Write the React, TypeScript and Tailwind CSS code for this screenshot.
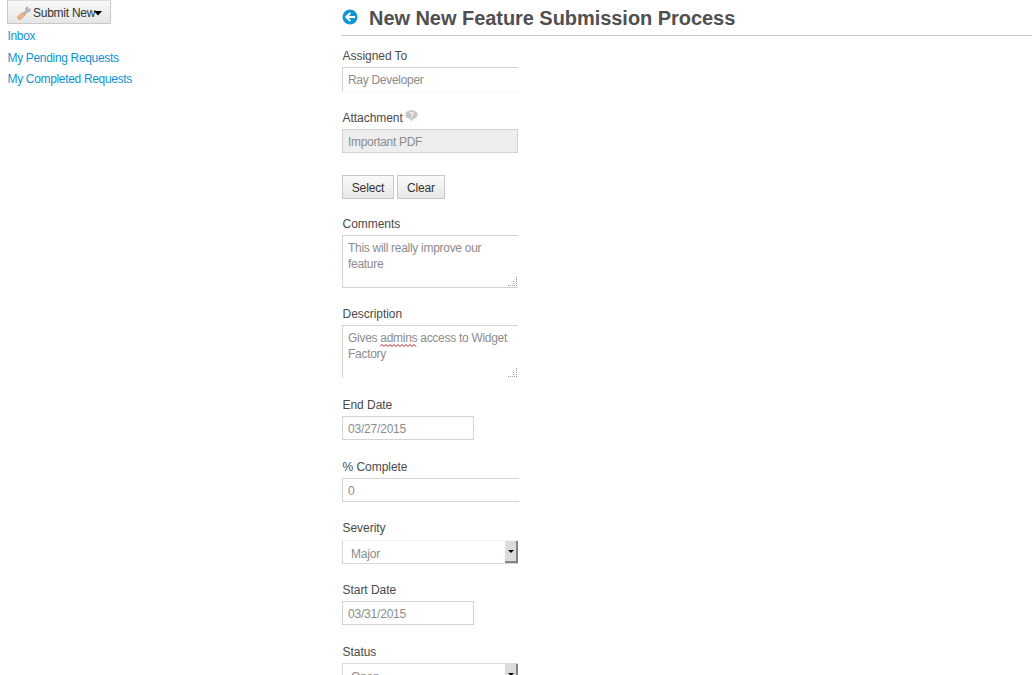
import React from "react";

function Field({ label, className, help, children }: { label: string; className: string; help?: boolean; children: React.ReactNode }) {
  return (
    <div className={className}>
      <div className="flex h-[19px] items-start pl-[0.5px] text-[12px] leading-[17px] tracking-[-0.04px] text-[#4a4a4a]">
        <span>{label}</span>
        {help && (
          <svg width="13" height="12" viewBox="0 0 13 12" className="ml-[2px]">
            <path d="M6.5 0.3C10 .3 12.600 2 12.600 4.700c0 2.300-2 3.900-4.600 4.200L6.300 11.600 5.200 9C2.500 8.700.4 7.200.4 4.700.4 2 3 .3 6.500.3z" fill="#c6c6c6" />
            <path d="M5 3.500c.2-1.700 3.100-1.600 3 0 0 1-1.400 1-1.400 2.200M6.600 6.800v1.100" stroke="#fff" strokeWidth="1.100" fill="none" />
          </svg>
        )}
      </div>
      {children}
    </div>
  );
}

function Grip() {
  return (
    <svg width="11" height="11" viewBox="0 0 11 11" className="absolute right-0 bottom-0" shapeRendering="crispEdges">
      <path d="M9 1h1v1H9zM9 3h1v1H9zM6 5h1v1H6zM9 5h1v1H9zM6 7h1v1H6zM9 7h1v1H9zM1 9h1v1H1zM3 9h1v1H3zM5 9h1v1H5zM7 9h1v1H7zM9 9h1v1H9z" fill="#999" />
    </svg>
  );
}

function Select({ value, className }: { value: string; className: string }) {
  return (
    <div className={`flex h-6 w-[176px] justify-between border border-r-0 border-[#d8d8d8] bg-white ${className}`}>
      <span className="pt-[5px] pl-2 text-[12px] leading-4 tracking-[-0.2px] text-[#8c8c8c]">{value}</span>
      <span className="flex h-[22px] w-[13px] items-center justify-center border-r-2 border-b-2 border-[#858282] bg-[#dedbdb]">
        <svg width="6" height="3" viewBox="0 0 6 3"><path d="M0 0h6L3 3z" fill="#000" /></svg>
      </span>
    </div>
  );
}

const input = "flex items-center border border-[#d3d3d3] pl-[5px] text-[12px] leading-4 text-[#8c8c8c]";
const area = "relative h-[53px] w-[176px] border border-r-0 border-[#d3d3d3] pt-1 pl-[5px] text-[12px] leading-4 tracking-[-0.29px] text-[#8c8c8c]";
const button = "flex h-6 items-center justify-center border border-[#c8c8c8] bg-linear-to-b from-[#fafafa] to-[#e8e8e8] pt-px text-[12px] tracking-[-0.15px] text-[#333]";

export default function App() {
  return (
    <div className="flex h-[675px] w-[1032px] overflow-hidden bg-white font-['Liberation_Sans',Arial,sans-serif]">
      <nav className="w-[342px] pl-[7px]">
        <button className="flex h-6 w-[104px] items-center border border-t-[#dedede] border-[#c8c8c8] bg-linear-to-b from-[#f8f8f8] to-[#e6e6e6] pt-[2px] pl-[9px] text-[12px] text-[#333]">
          <svg width="14" height="14" viewBox="0 0 14 14" className="mr-[2px]">
            <path d="M6 7.500L9 4.500 8.700 2 10.500.8 10.600 3l1.500.6L13.200 2.500 13 5.200 10.700 6 7.500 9z" fill="#b9bcbf" stroke="#8e9194" strokeWidth=".6" />
            <path d="M5.400 6.500L8 9 4 13Q2.500 14 1.200 12.700 0 11.400 1.300 10.200z" fill="#f4b183" stroke="#dc8a58" strokeWidth=".7" />
          </svg>
          <span className="tracking-[-0.25px]">Submit New</span>
          <svg width="8" height="5" viewBox="0 0 8 5" className="-ml-px"><path d="M0 0h8L4 4.500z" fill="#000" /></svg>
        </button>
        <ul className="pt-[2px] pl-[0.5px] text-[12px] leading-[21.7px] tracking-[-0.33px] text-[#0d93cf]">
          <li>Inbox</li>
          <li>My Pending Requests</li>
          <li>My Completed Requests</li>
        </ul>
      </nav>
      <main className="w-[690px]">
        <header className="mb-3 flex h-9 items-center border-b border-[#c6c6c6] pb-px">
          <svg width="16" height="16" viewBox="0 0 16 16">
            <circle cx="8" cy="8" r="7.500" fill="#1193d4" />
            <path d="M13 8H4.500M8.300 4L4.300 8l4 4" stroke="#fff" strokeWidth="2" fill="none" />
          </svg>
          <h1 className="ml-[11px] pt-px text-[20px] font-bold tracking-[-0.05px] text-[#505050]">New New Feature Submission Process</h1>
        </header>
        <Field label="Assigned To" className="h-[62px]">
          <div className={`${input} h-[25px] w-[176px] border-r-0 border-b-[#f6f6f6] tracking-[-0.3px]`}>Ray Developer</div>
        </Field>
        <Field label="Attachment" className="h-[106px]" help>
          <div className={`${input} h-6 w-[176px] bg-[#eee] pt-px tracking-[-0.3px]`}>Important PDF</div>
          <div className="mt-[22px] flex gap-[3px]">
            <button className={`${button} w-[52px]`}>Select</button>
            <button className={`${button} w-[48px]`}>Clear</button>
          </div>
        </Field>
        <Field label="Comments" className="h-[90px]">
          <div className={area}>
            This will really improve our<br />feature
            <Grip />
          </div>
        </Field>
        <Field label="Description" className="h-[91px]">
          <div className={`${area} border-b-0`}>
            Gives <span className="relative inline-block">admins
              <svg width="37" height="3" viewBox="0 0 37 3" className="absolute bottom-[-1px] left-0">
                <path d="M0 2.500l2-2 2 2 2-2 2 2 2-2 2 2 2-2 2 2 2-2 2 2 2-2 2 2 2-2 2 2 2-2 2 2 2-2 2 2" stroke="#b8232b" fill="none" strokeWidth="1" />
              </svg>
            </span> access to Widget<br />Factory
            <Grip />
          </div>
        </Field>
        <Field label="End Date" className="h-[62px]">
          <div className={`${input} h-6 w-[132px] pt-px tracking-[-0.2px]`}>03/27/2015</div>
        </Field>
        <Field label="% Complete" className="h-[61px]">
          <div className={`${input} h-6 w-[177px] border-r-0 pt-px`}>0</div>
        </Field>
        <Field label="Severity" className="h-[62px]">
          <div className="pt-px">
            <Select value="Major" className="border-t-[#f4f4f4]" />
          </div>
        </Field>
        <Field label="Start Date" className="h-[62px]">
          <div className={`${input} h-6 w-[132px] pt-px tracking-[-0.2px]`}>03/31/2015</div>
        </Field>
        <Field label="Status" className="h-[62px]">
          <Select value="Open" className="" />
        </Field>
      </main>
    </div>
  );
}
